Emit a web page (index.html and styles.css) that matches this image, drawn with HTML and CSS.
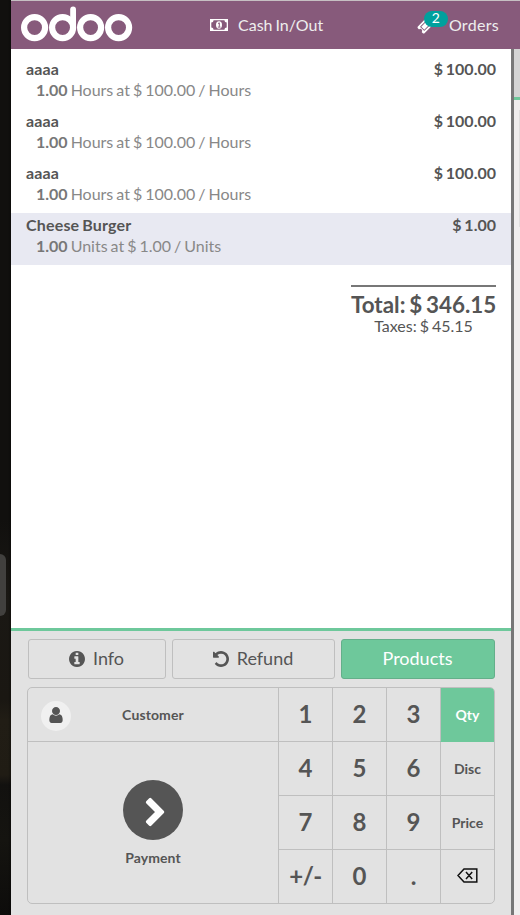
FILE: index.html
```html
<!DOCTYPE html>
<html lang="en">
<head>
<meta charset="utf-8">
<title>Odoo Point of Sale</title>
<link rel="stylesheet" href="styles.css">
</head>
<body>
<div class="backdrop"><div class="handle"></div></div>
<main class="pos">
  <header class="topbar">
    <svg class="logo" viewBox="0 0 112 36" width="112" height="36" aria-label="odoo">
      <g fill="none" stroke="#fff" stroke-width="6.2">
        <circle cx="13.6" cy="21.6" r="10.5"/>
        <circle cx="41.6" cy="21.6" r="10.5"/>
        <circle cx="69.6" cy="21.6" r="10.5"/>
        <circle cx="97.6" cy="21.6" r="10.5"/>
        <path d="M52.1 21.6V3.4" stroke-width="5.8" stroke-linecap="round"/>
      </g>
    </svg>
    <div class="cash">
      <svg class="money" viewBox="0 0 18 12" width="18" height="12">
        <path fill="#fff" fill-rule="evenodd" d="M0 0H18V12H0ZM3.6 1.3A2.4 2.4 0 0 1 1.3 3.6V8.4A2.4 2.4 0 0 1 3.6 10.7H14.4A2.4 2.4 0 0 1 16.7 8.4V3.6A2.4 2.4 0 0 1 14.4 1.3Z"/>
        <ellipse cx="9" cy="6" rx="3" ry="3.7" fill="#fff"/>
        <path d="M8 4.6L9.3 3.8V7.8M7.8 8.1H10.5" fill="none" stroke="#875a7b" stroke-width="1"/>
      </svg>
      <span class="nav-text">Cash In/Out</span>
    </div>
    <div class="orders">
      <span class="ticket-wrap">
        <svg class="ticket" viewBox="0 0 1792 1792" width="17" height="17"><path fill="#fff" d="M1024 452l316 316-572 572-316-316zm-211 979l618-618q19-19 19-45t-19-45l-362-362q-18-18-45-18t-45 18l-618 618q-19 19-19 45t19 45l362 362q18 18 45 18t45-18zm889-637l-907 908q-37 37-90.5 37t-90.5-37l-126-125q56-56 56-136t-56-136-136-56-136 56l-125-126q-37-37-37-90.5t37-90.5l907-906q37-37 90.5-37t90.5 37l125 125q-56 56-56 136t56 136 136 56 136-56l126 125q37 37 37 90.5t-37 90.5z"/></svg>
        <span class="badge">2</span>
      </span>
      <span class="nav-text wide">Orders</span>
    </div>
  </header>
  <section class="order">
    <ul class="lines">
      <li class="line"><div class="row"><span class="name">aaaa</span><span>$ 100.00</span></div><div class="info"><b>1.00</b> Hours at $ 100.00 / Hours</div></li>
      <li class="line"><div class="row"><span class="name">aaaa</span><span>$ 100.00</span></div><div class="info"><b>1.00</b> Hours at $ 100.00 / Hours</div></li>
      <li class="line"><div class="row"><span class="name">aaaa</span><span>$ 100.00</span></div><div class="info"><b>1.00</b> Hours at $ 100.00 / Hours</div></li>
      <li class="line selected"><div class="row"><span class="name">Cheese Burger</span><span>$ 1.00</span></div><div class="info"><b>1.00</b> Units at $ 1.00 / Units</div></li>
    </ul>
    <div class="summary">
      <div class="total">Total: $ 346.15</div>
      <div class="taxes">Taxes: $ 45.15</div>
    </div>
  </section>
  <section class="pads">
    <div class="controls">
      <button class="control">
        <svg viewBox="128 128 1536 1536" width="16" height="16"><path fill="currentColor" d="M1152 1376v-160q0-14-9-23t-23-9h-96v-512q0-14-9-23t-23-9h-320q-14 0-23 9t-9 23v160q0 14 9 23t23 9h96v320h-96q-14 0-23 9t-9 23v160q0 14 9 23t23 9h448q14 0 23-9t9-23zm-128-896v-160q0-14-9-23t-23-9h-192q-14 0-23 9t-9 23v160q0 14 9 23t23 9h192q14 0 23-9t9-23zm640 416q0 209-103 385.5t-279.5 279.5-385.5 103-385.5-103-279.5-279.5-103-385.5 103-385.5 279.5-279.5 385.5-103 385.5 103 279.5 279.5 103 385.5z"/></svg>
        <span>Info</span>
      </button>
      <button class="control">
        <svg viewBox="128 128 1536 1536" width="16" height="16"><path fill="currentColor" d="M1664 896q0 156-61 298t-164 245-245 164-298 61q-172 0-327-72.5t-264-204.5q-7-10-6.5-22.5t8.5-20.5l137-138q10-9 25-9 16 2 23 12 73 95 179 147t225 52q104 0 198.5-40.5t163.5-109.5 109.5-163.5 40.5-198.5-40.5-198.5-109.5-163.5-163.5-109.5-198.5-40.5q-98 0-188 35.5t-160 101.5l137 138q31 30 14 69-17 40-59 40h-448q-26 0-45-19t-19-45v-448q0-42 40-59 39-17 69 14l130 129q107-101 244.5-156.5t284.5-55.5q156 0 298 61t245 164 164 245 61 298z"/></svg>
        <span>Refund</span>
      </button>
      <button class="control primary"><span>Products</span></button>
    </div>
    <div class="pad">
      <div class="actions">
        <button class="customer">
          <span class="avatar"><svg viewBox="256 128 1280 1536" width="14" height="16"><path fill="currentColor" d="M1536 1399q0 109-62.5 187t-150.5 78h-854q-88 0-150.5-78t-62.5-187q0-85 8.5-160.5t31.5-152 58.5-131 94-89 134.5-34.5q131 128 313 128t313-128q76 0 134.5 34.5t94 89 58.5 131 31.5 152 8.5 160.5zm-256-887q0 159-112.5 271.5t-271.5 112.5-271.5-112.5-112.5-271.5 112.5-271.5 271.5-112.5 271.5 112.5 112.5 271.5z"/></svg></span>
          <span class="customer-name">Customer</span>
        </button>
        <button class="payment">
          <span class="go"><svg viewBox="0 0 20 30" width="20" height="30"><path fill="#fff" d="M1.2 4.2L4.2 1.2Q5.2 .4 6.2 1.2L18.9 14Q19.8 15 18.9 16L6.2 28.8Q5.2 29.6 4.2 28.8L1.2 25.8Q.4 24.8 1.2 23.8L10 15L1.2 6.2Q.4 5.2 1.2 4.2Z"/></svg></span>
          <span>Payment</span>
        </button>
      </div>
      <div class="keys">
        <button>1</button><button>2</button><button>3</button><button class="mode active">Qty</button>
        <button>4</button><button>5</button><button>6</button><button class="mode">Disc</button>
        <button>7</button><button>8</button><button>9</button><button class="mode">Price</button>
        <button class="sign">+/-</button><button>0</button><button>.</button>
        <button class="erase"><svg viewBox="0 0 21 15" width="21" height="15"><path d="M7 1H19.8V14H7L1 7.5ZM9 4L15.2 11M15.2 4L9 11" fill="none" stroke="#111" stroke-width="1.5"/></svg></button>
      </div>
    </div>
  </section>
</main>
<aside class="products-pane">
  <div class="pane-top"></div>
  <div class="pane-body"><div class="pane-head"></div><div class="pane-card"></div></div>
</aside>
</body>
</html>
```
FILE: styles.css
```css
* { box-sizing: border-box; }
body {
  margin: 0;
  width: 520px;
  height: 915px;
  display: flex;
  overflow: hidden;
  font-family: Lato, "Liberation Sans", sans-serif;
  font-size: 16px;
  word-spacing: -1.1px;
  color: #555;
}
svg { display: block; flex: none; }
button {
  font: inherit;
  color: inherit;
  background: none;
  border: 0;
  padding: 0;
  margin: 0;
}
.backdrop {
  width: 11px;
  flex: none;
  padding-top: 554px;
  background: linear-gradient(90deg, transparent 8px, rgba(0,0,0,.3)), linear-gradient(#11100e 0, #11100e 520px, #1a1814 600px, #1a1712 700px, #211d15 720px, #201c14 775px, #12110f 785px, #151410 840px, #0d0c0b 915px);
}
.handle { width: 6px; height: 62px; background: #41403e; border-radius: 0 6px 6px 0; }
.pos { width: 500px; flex: none; display: flex; flex-direction: column; }
.topbar {
  height: 49px;
  flex: none;
  display: flex;
  align-items: center;
  background: #875a7b;
  border-top: 1px solid #c6bfc3;
  color: #eee;
  padding: 0 12px 0 10px;
}
.logo { margin-top: -3px; }
.cash { display: flex; align-items: center; gap: 10px; margin-left: 77px; }
.orders { display: flex; align-items: center; gap: 15px; margin-left: auto; }
.nav-text { padding-bottom: 2px; }
.wide { letter-spacing: .3px; }
.ticket-wrap { position: relative; }
.badge {
  position: absolute;
  left: 7px;
  top: -6px;
  width: 24px;
  height: 16px;
  border-radius: 8px;
  background: #00a09d;
  color: #fff;
  font-size: 14px;
  line-height: 14px;
  text-align: center;
}
.order { flex: 1; background: #fff; padding-top: 8px; }
.lines { list-style: none; margin: 0; padding: 0; }
.line { height: 52px; padding: 1px 15px 0; line-height: 21px; }
.row { display: flex; justify-content: space-between; font-weight: 700; }
.name { letter-spacing: .17px; }
.info { padding-left: 10px; color: #888; }
.info b { color: #777; }
.selected { background: #e8e9f2; }
.summary {
  width: 145px;
  margin: 20px 15px 0 auto;
  border-top: 2px solid #777;
  text-align: center;
}
.total { font-size: 22.4px; font-weight: 700; line-height: 24px; padding-top: 6px; white-space: nowrap; word-spacing: -1.6px; }
.taxes { line-height: 18px; }
.pads {
  height: 287px;
  flex: none;
  background: #e2e2e2;
  border-top: 3px solid #6ec89b;
  padding: 8px 16px 0;
}
.controls {
  display: grid;
  grid-template-columns: 138px 163px 154px;
  gap: 6px;
  padding-left: 1px;
  height: 40px;
}
.control {
  display: flex;
  align-items: center;
  justify-content: center;
  gap: 8px;
  padding-right: 1px;
  border: 1px solid #bfbfbf;
  border-radius: 3px;
  font-size: 18px;
}
.control span { padding-bottom: 2px; }
.primary { background: #6ec89b; border-color: #64af8a; color: #fff; }
.pad {
  width: 468px;
  height: 217px;
  margin-top: 8px;
  display: flex;
  border: 1px solid #bfbfbf;
  border-radius: 5px;
  overflow: hidden;
}
.actions { width: 250px; display: flex; flex-direction: column; font-size: 14px; font-weight: 700; }
.customer { height: 54px; flex: none; display: flex; align-items: center; border-bottom: 1px solid #bfbfbf; padding-left: 13px; }
.avatar {
  width: 30px;
  height: 30px;
  margin-top: 3px;
  border-radius: 50%;
  background: #f0f0f0;
  display: flex;
  align-items: center;
  justify-content: center;
  padding-bottom: 2px;
}
.customer-name { flex: 1; padding-right: 43px; text-align: center; margin-top: -1px; letter-spacing: .12px; }
.payment { flex: 1; display: flex; flex-direction: column; align-items: center; justify-content: center; gap: 9px; padding-top: 1px; letter-spacing: .05px; }
.go {
  width: 60px;
  height: 60px;
  border-radius: 50%;
  background: #555;
  display: flex;
  align-items: center;
  justify-content: center;
  padding: 3px 0 0 3px;
}
.keys {
  width: 216px;
  display: grid;
  grid-template-columns: repeat(4, 54px);
  grid-template-rows: repeat(4, 54px);
}
.keys button {
  border-left: 1px solid #bfbfbf;
  border-bottom: 1px solid #bfbfbf;
  font-size: 24px;
  font-weight: 700;
  display: flex;
  align-items: center;
  justify-content: center;
  padding-bottom: 2px;
}
.keys .mode { font-size: 14px; padding-bottom: 0; }
.keys .sign { letter-spacing: -.6px; }
.keys .erase { padding: 0 1px 2px 0; }
.keys .active { background: #6ec89b; border-bottom-color: #6ec89b; color: #fff; }
.products-pane { width: 9px; flex: none; display: flex; flex-direction: column; }
.pane-top { height: 49px; background: #875a7b; border-top: 1px solid #c6bfc3; }
.pane-body { flex: 1; border-left: 3px solid #777; background: #f0eeee; }
.pane-head { height: 51px; background: #d3d3d3; border-bottom: 3px solid #6ec89b; }
.pane-card { width: 1px; height: 117px; margin: 10px 0 0 auto; background: #e0dede; }
```
